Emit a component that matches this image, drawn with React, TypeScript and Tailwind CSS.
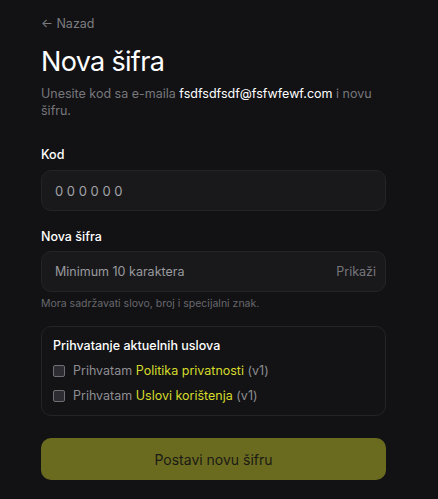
import { useState } from 'react';

export default function App() {
  const [showPassword, setShowPassword] = useState(false);
  const [privacy, setPrivacy] = useState(false);
  const [terms, setTerms] = useState(false);

  return (
    <div
      className="min-h-screen bg-[#121215] text-white"
      style={{ fontFamily: 'Inter, "Noto Sans", sans-serif' }}
    >
      <div className="w-[345px] ml-[41px] pt-[15px]">
        <button type="button" className="block text-[12.5px] text-[#7d7d80] leading-[18px]">
          ← Nazad
        </button>

        <h1 className="mt-[12px] text-[27px] leading-[34px] font-normal tracking-tight text-white">
          Nova šifra
        </h1>
        <p className="mt-[6px] text-[12.5px] leading-[17px] text-[#77777b]">
          Unesite kod sa e-maila <span className="text-white">fsdfsdfsdf@fsfwfewf.com</span> i novu šifru.
        </p>

        {/* Kod */}
        <label className="block mt-[27px] text-[12.5px] leading-[18px] font-medium text-white">Kod</label>
        <input
          type="text"
          placeholder="0 0 0 0 0 0"
          className="block mt-[6px] w-full h-[41px] rounded-[10px] border border-[#232427] bg-[#19191c] px-[13px] text-[13px] text-white placeholder:text-[#a2a2a6] outline-none"
        />

        {/* Nova šifra */}
        <label className="block mt-[17px] text-[12.5px] leading-[18px] font-medium text-white">Nova šifra</label>
        <div className="mt-[5px] relative">
          <input
            type={showPassword ? 'text' : 'password'}
            placeholder="Minimum 10 karaktera"
            className="block w-full h-[41px] rounded-[10px] border border-[#232427] bg-[#19191c] pl-[13px] pr-[60px] text-[12.5px] text-white placeholder:text-[#9a9a9e] outline-none"
          />
          <button
            type="button"
            onClick={() => setShowPassword(!showPassword)}
            className="absolute right-[10px] top-1/2 -translate-y-1/2 text-[12.5px] text-[#77777b]"
          >
            Prikaži
          </button>
        </div>
        <p className="mt-[4px] text-[10.5px] leading-[16px] text-[#68686c]">
          Mora sadržavati slovo, broj i specijalni znak.
        </p>

        {/* Uslovi */}
        <div className="mt-[14px] rounded-[10px] border border-[#232427] bg-[#131316] px-[11px] pt-[10px] pb-[10px]">
          <p className="text-[12.5px] leading-[18px] font-medium text-white">Prihvatanje aktuelnih uslova</p>
          <div className="mt-[7px] flex flex-col gap-[7px]">
            <label className="flex items-center gap-[8px] text-[12.5px] leading-[18px] text-[#8e8e92]">
              <input
                type="checkbox"
                checked={privacy}
                onChange={(e) => setPrivacy(e.target.checked)}
                className="appearance-none w-[12px] h-[12px] rounded-[2px] border border-[#6e6e74] bg-[#2c2c32] checked:bg-[#d7dc2c]"
              />
              <span>
                Prihvatam <span className="text-[#d6db2a]">Politika privatnosti</span> (v1)
              </span>
            </label>
            <label className="flex items-center gap-[8px] text-[12.5px] leading-[18px] text-[#8e8e92]">
              <input
                type="checkbox"
                checked={terms}
                onChange={(e) => setTerms(e.target.checked)}
                className="appearance-none w-[12px] h-[12px] rounded-[2px] border border-[#6e6e74] bg-[#2c2c32] checked:bg-[#d7dc2c]"
              />
              <span>
                Prihvatam <span className="text-[#d6db2a]">Uslovi korištenja</span> (v1)
              </span>
            </label>
          </div>
        </div>

        <button
          type="button"
          className="block mt-[22px] w-full h-[42px] rounded-[10px] bg-[#6b6b20] text-[14px] text-[#1a1a14]"
        >
          Postavi novu šifru
        </button>
      </div>
    </div>
  );
}
